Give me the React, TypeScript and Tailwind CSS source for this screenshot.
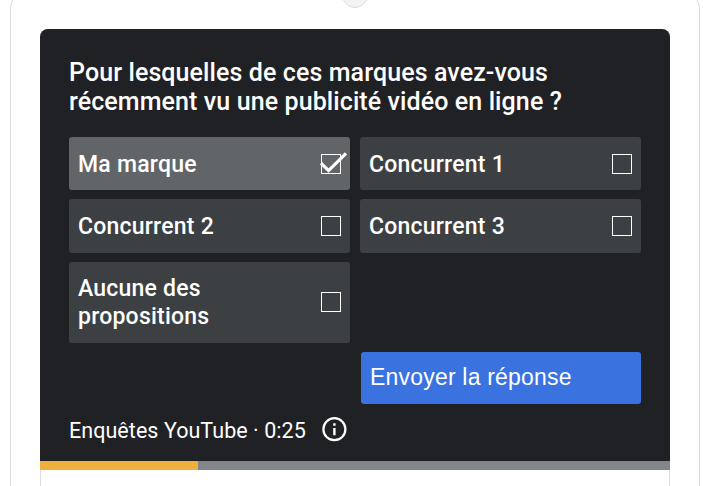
import { clsx } from "clsx";

type Option = {
  label: string;
  checked?: boolean;
};

const options: Option[] = [
  { label: "Ma marque", checked: true },
  { label: "Concurrent 1" },
  { label: "Concurrent 2" },
  { label: "Concurrent 3" },
  { label: "Aucune des propositions" },
];

const Checkbox = ({ checked }: { checked?: boolean }) => (
  <span className="relative block h-5 w-5 shrink-0 border border-white">
    {checked && (
      <svg className="absolute -left-[2px] -top-[3px] h-6 w-7" viewBox="0 0 28 24" fill="none">
        <path d="M1 11.2 8.6 18.6 26 1.4" stroke="white" strokeWidth="3.2" />
      </svg>
    )}
  </span>
);

const OptionCard = ({ label, checked }: Option) => (
  <div
    className={clsx(
      "flex items-center justify-between rounded-[3px] pl-[9px] pr-[9px] last-of-type:pb-px",
      checked ? "bg-[#626568]" : "bg-[#3c4043]"
    )}
  >
    <span className="w-[170px] pt-[2px] text-[23px] font-medium leading-7 tracking-[0.22px]">{label}</span>
    <Checkbox checked={checked} />
  </div>
);

const InfoIcon = () => (
  <svg className="h-[25px] w-[25px]" viewBox="0 0 25 25" fill="none">
    <circle cx="12.4" cy="12.2" r="11" stroke="white" strokeWidth="2.2" />
    <path d="M12.4 11v7.2M12.4 6.2v2.6" stroke="white" strokeWidth="2.4" />
  </svg>
);

const App = () => {
  return (
    <div className="h-[486px] w-[708px] overflow-hidden bg-white font-['Roboto',sans-serif] text-white">
      <div className="relative -mt-2 ml-[10px] h-[520px] w-[690px] rounded-2xl border border-[#dadce0] px-[29px] pt-9">
        <span className="absolute left-[331px] -top-[11px] h-[26px] w-[26px] rounded-full border border-[#dadce0] bg-[#f1f3f4]" />

        <div className="h-[480px] w-[630px] rounded-t-lg border border-[#dadce0]">
          <div className="-ml-px -mt-px h-[432px] w-[630px] rounded-t-lg bg-[#202124] px-[29px] pt-[29px]">
            <h1 className="whitespace-nowrap text-[25px] font-medium leading-[29px] tracking-[0.1px]">
              Pour lesquelles de ces marques avez-vous
              <br />
              récemment vu une publicité vidéo en ligne ?
            </h1>

            <div className="mt-[21px] grid w-[572px] grid-cols-2 grid-rows-[53px_54px_81px_52px] gap-x-[10px] gap-y-[9px]">
              {options.map((option) => (
                <OptionCard key={option.label} {...option} />
              ))}
              <button className="col-start-2 row-start-4 ml-px rounded-[3px] bg-[#3a72e0] pb-px pl-[9px] text-left font-['Liberation_Sans',sans-serif] text-[23px] tracking-[0.2px]">
                Envoyer la réponse
              </button>
            </div>

            <div className="mt-3 flex h-[26px] items-center gap-4">
              <span className="whitespace-nowrap pt-[3px] text-[21.5px] leading-[26px] tracking-[0.05px]">
                Enquêtes YouTube · 0:25
              </span>
              <InfoIcon />
            </div>
          </div>

          {/* Barre de progression */}
          <div className="-ml-px h-[9px] w-[630px] bg-[#80868b]">
            <div className="h-full w-1/4 rounded-r-[1px] bg-[#efb03d]" />
          </div>
        </div>
      </div>
    </div>
  );
};

export default App;
